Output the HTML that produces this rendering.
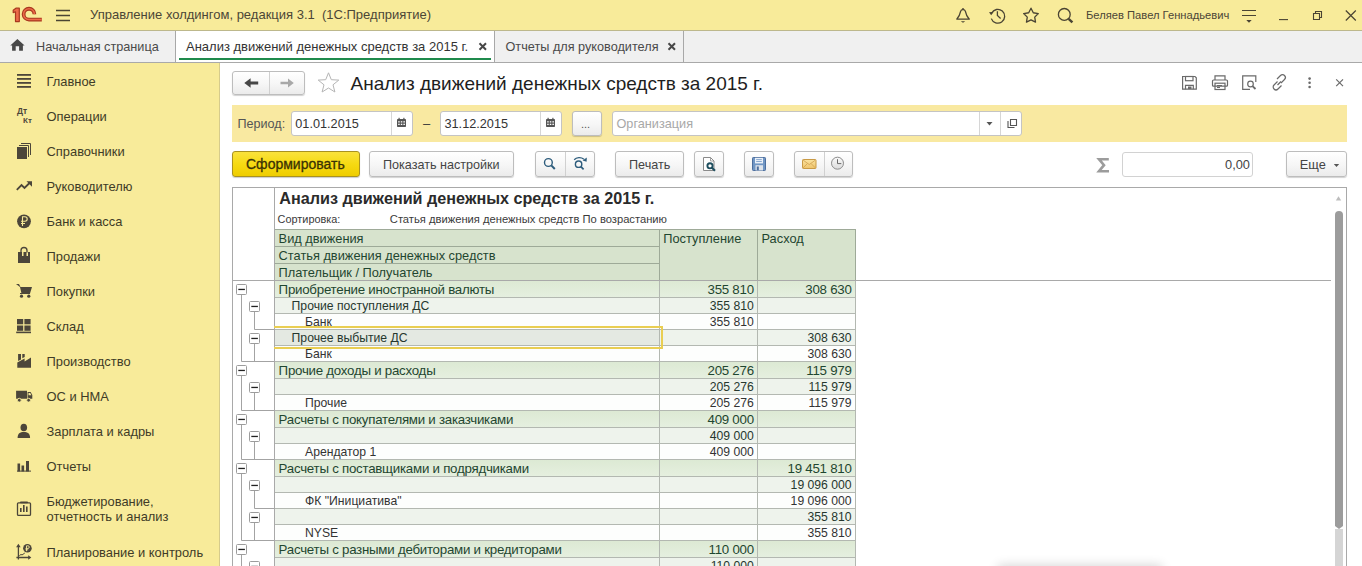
<!DOCTYPE html>
<html><head><meta charset="utf-8">
<style>
*{box-sizing:border-box;margin:0;padding:0}
html,body{width:1362px;height:566px;overflow:hidden;background:#fff}
body{position:relative;font-family:"Liberation Sans",sans-serif;color:#333}
.a{position:absolute;white-space:nowrap}
.btn{position:absolute;border:1px solid #BDBDBD;border-radius:3px;background:linear-gradient(#FFFFFF,#F6F6F6 55%,#EBEBEB);box-shadow:0 1px 1px rgba(0,0,0,.18)}
.inp{position:absolute;border:1px solid #C4C4C4;border-radius:3px;background:#fff}
svg{position:absolute;overflow:visible}
</style></head><body>

<div class="a" style="left:0px;top:0px;width:1362px;height:31px;background:#F8EB9A;border-bottom:1px solid #BDB88C"></div>
<div class="a" style="left:0px;top:31px;width:1362px;height:32px;background:#F0F0F0;border-bottom:1px solid #A9A9A9"></div>
<div class="a" style="left:0px;top:63px;width:220px;height:503px;background:#F8EB9A;border-right:1px solid #D6CB8C"></div>
<svg style="left:0;top:0" width="60" height="31" viewBox="0 0 60 31"><path d="M15.5 21.6 V11.8 L13.2 12.6 V10.3 L15.9 8.2 H19.3 V21.6 Z" fill="#EC6A48" stroke="#A8381F" stroke-width="1.2" stroke-linejoin="round"/><path d="M34.4 14.15 A5.4 5.4 0 1 0 29 19.55 H41.8" fill="none" stroke="#A8381F" stroke-width="3.8"/><path d="M34.4 14.15 A5.4 5.4 0 1 0 29 19.55 H41.8" fill="none" stroke="#EC6A48" stroke-width="1.5"/></svg>
<svg style="left:0;top:0" width="80" height="31"><g stroke="#4A4433" stroke-width="1.3"><path d="M56 10.5H70M56 15.5H70M56 20.5H70"/></g></svg>
<div class="a " style="left:90px;top:7px;font-size:13px;line-height:15px;color:#4B4636;font-weight:normal;">Управление холдингом, редакция 3.1&nbsp;&nbsp;(1С:Предприятие)</div>
<svg style="left:940px;top:0" width="140" height="31" viewBox="940 0 140 31"><g fill="none" stroke="#4A4433" stroke-width="1.2"><path d="M956.3 19.2 H969.8 M956.9 19 C958.8 16.8 960.2 13.5 960.6 11.4 C960.9 10.2 961.8 9.7 963 9.7 C964.2 9.7 965.1 10.2 965.4 11.4 C965.8 13.5 967.2 16.8 969.1 19" stroke-width="1.3"/><path d="M963 8 V9.8" stroke-width="1.4"/><path d="M991.6 13.2 A6.9 6.9 0 1 1 991.3 18.6" stroke-width="1.3"/><path d="M997.4 11.2 V15.5 L1000.6 18.5" stroke-width="1.3"/><path d="M1031.00 8.20 L1033.29 12.74 L1038.32 13.52 L1034.71 17.11 L1035.53 22.13 L1031.00 19.80 L1026.47 22.13 L1027.29 17.11 L1023.68 13.52 L1028.71 12.74 Z" stroke-width="1.3" stroke-linejoin="round"/><circle cx="1064.3" cy="14.4" r="5.9" stroke-width="1.3"/><path d="M1068.6 18.8 L1072.4 22.4" stroke-width="2.4"/></g><path d="M989 12.3 L993.6 11.7 L991.2 15.2 Z" fill="#4A4433"/><path d="M960.8 21.2 H965.2 L963 22.8 Z" fill="#4A4433"/></svg>
<div class="a " style="left:1086px;top:9px;font-size:11.2px;line-height:12px;color:#4B4636;font-weight:normal;">Беляев Павел Геннадьевич</div>
<svg style="left:1230px;top:0" width="132" height="31" viewBox="1230 0 132 31"><g fill="none" stroke="#4A4433" stroke-width="1.1"><path d="M1242 10.5 H1256 M1242 15.5 H1256"/><path d="M1279 19.6 H1288"/><path d="M1313.5 13.5 H1319.5 V19.5 H1313.5 Z M1315.5 13.5 V11.5 H1321.5 V17.5 H1319.5"/><path d="M1345.8 10.5 L1355.8 20.5 M1355.8 10.5 L1345.8 20.5" stroke-width="1.2"/></g><path d="M1246.3 20 H1251.7 L1249 22.8 Z" fill="#4A4433"/></svg>
<svg style="left:0;top:31px" width="30" height="31" viewBox="0 31 30 31"><path d="M17.4 39 L24.6 45.5 H22.9 V50.7 H19.1 V46.2 H15.7 V50.7 H12.1 V45.5 H10.3 Z" fill="#484848"/></svg>
<div class="a " style="left:36px;top:40px;font-size:12.7px;line-height:14px;color:#4A4A4A;font-weight:normal;">Начальная страница</div>
<div class="a" style="left:175px;top:31px;width:1px;height:31px;background:#A8A8A8"></div>
<div class="a" style="left:176px;top:31px;width:318px;height:31px;background:#fff"></div>
<div class="a" style="left:494px;top:31px;width:1px;height:31px;background:#A8A8A8"></div>
<div class="a" style="left:179px;top:58px;width:312px;height:2px;background:#1F8A4C"></div>
<div class="a " style="left:186px;top:39px;font-size:13px;line-height:15px;color:#333;font-weight:normal;">Анализ движений денежных средств за 2015 г.</div>
<svg style="left:470px;top:31px" width="220" height="31" viewBox="470 31 220 31"><g stroke="#474747" stroke-width="2"><path d="M479.5 43.2 L486 49.7 M486 43.2 L479.5 49.7"/><path d="M668.5 43.2 L675 49.7 M675 43.2 L668.5 49.7"/></g></svg>
<div class="a " style="left:505.5px;top:40px;font-size:12.7px;line-height:14px;color:#4A4A4A;font-weight:normal;">Отчеты для руководителя</div>
<div class="a" style="left:683px;top:31px;width:1px;height:31px;background:#A8A8A8"></div>
<div class="a " style="left:46.5px;top:74px;font-size:12.9px;line-height:15px;color:#403B27;font-weight:normal;">Главное</div>
<div class="a " style="left:46.5px;top:109px;font-size:12.9px;line-height:15px;color:#403B27;font-weight:normal;">Операции</div>
<div class="a " style="left:46.5px;top:144px;font-size:12.9px;line-height:15px;color:#403B27;font-weight:normal;">Справочники</div>
<div class="a " style="left:46.5px;top:179px;font-size:12.9px;line-height:15px;color:#403B27;font-weight:normal;">Руководителю</div>
<div class="a " style="left:46.5px;top:214px;font-size:12.9px;line-height:15px;color:#403B27;font-weight:normal;">Банк и касса</div>
<div class="a " style="left:46.5px;top:249px;font-size:12.9px;line-height:15px;color:#403B27;font-weight:normal;">Продажи</div>
<div class="a " style="left:46.5px;top:284px;font-size:12.9px;line-height:15px;color:#403B27;font-weight:normal;">Покупки</div>
<div class="a " style="left:46.5px;top:319px;font-size:12.9px;line-height:15px;color:#403B27;font-weight:normal;">Склад</div>
<div class="a " style="left:46.5px;top:354px;font-size:12.9px;line-height:15px;color:#403B27;font-weight:normal;">Производство</div>
<div class="a " style="left:46.5px;top:389px;font-size:12.9px;line-height:15px;color:#403B27;font-weight:normal;">ОС и НМА</div>
<div class="a " style="left:46.5px;top:424px;font-size:12.9px;line-height:15px;color:#403B27;font-weight:normal;">Зарплата и кадры</div>
<div class="a " style="left:46.5px;top:459px;font-size:12.9px;line-height:15px;color:#403B27;font-weight:normal;">Отчеты</div>
<div class="a " style="left:46.5px;top:494px;font-size:12.9px;line-height:15px;color:#403B27;font-weight:normal;">Бюджетирование,</div>
<div class="a " style="left:46.5px;top:509px;font-size:12.9px;line-height:15px;color:#403B27;font-weight:normal;">отчетность и анализ</div>
<div class="a " style="left:46.5px;top:545px;font-size:12.9px;line-height:15px;color:#403B27;font-weight:normal;">Планирование и контроль</div>
<svg style="left:0;top:0" width="40" height="566" viewBox="0 0 40 566"><g fill="#4C463A"><rect x="17" y="74" width="14" height="1.8"/><rect x="17" y="78" width="14" height="1.8"/><rect x="17" y="82" width="14" height="1.8"/><rect x="17" y="86" width="14" height="1.8"/><rect x="17" y="147" width="10" height="12"/></g><g fill="none" stroke="#4C463A" stroke-width="1.1"><path d="M19 145.5 H28.5 V157" stroke-width="1"/><path d="M21 143.5 H30.5 V155" stroke-width="1"/><path d="M16.8 189.8 L21.5 185 L24.5 188 L30 182.5" stroke-width="1.8"/></g><g fill="#4C463A"><path d="M26.5 181.2 H32 V186.7 Z"/><circle cx="24" cy="221.3" r="6.9"/><path d="M18 252 H22 V256 H23.5 V252 H26.5 V256 H28 V252 H30 V263 H18 Z"/><path d="M16 284 H19 L20.5 287 H32 L30 293.5 H21.5 L20 287 Z"/><circle cx="21.5" cy="296.2" r="1.6"/><circle cx="28.8" cy="296.2" r="1.6"/><rect x="20" y="293" width="10" height="1"/><rect x="17" y="319" width="6.2" height="5.3"/><rect x="24.4" y="319" width="6.2" height="5.3"/><rect x="17" y="325.5" width="6.2" height="5.3"/><rect x="24.4" y="325.5" width="6.2" height="5.3"/><rect x="16.2" y="331.6" width="14.8" height="1.6"/><path d="M17.3 367.8 V362.6 L24.6 358.5 V361.6 L31 357.6 V367.8 Z"/><path d="M18.1 354 H21 V359.4 L18.1 361 Z M22.3 354 H24.7 V357 L22.3 358.3 Z"/><path d="M16.1 390.8 H27 V398.8 H16.1 Z M27.6 392 H30.6 L32.3 395 V398.8 H27.6 Z"/><circle cx="19.3" cy="400.2" r="1.9" stroke="#F8EB9A" stroke-width="0.9"/><circle cx="28.6" cy="400.2" r="1.9" stroke="#F8EB9A" stroke-width="0.9"/><path d="M28.5 393 H30.2 L31.4 395.3 H28.5 Z" fill="#F8EB9A"/><ellipse cx="23.8" cy="427.5" rx="3.3" ry="3.8"/><path d="M17.6 438 C17.6 433.5 20 432 23.8 432 C27.6 432 30.1 433.5 30.1 438 Z"/><rect x="17.5" y="463.5" width="2.6" height="8"/><rect x="21.5" y="465.5" width="2.6" height="6"/><rect x="26" y="461" width="3" height="10.5"/><rect x="17" y="470.6" width="14" height="1"/><rect x="20" y="508" width="1.6" height="4"/><rect x="23" y="505" width="1.6" height="7"/><rect x="26" y="506.5" width="1.6" height="5.5"/><rect x="20" y="501.5" width="8" height="1.8" rx="0.8"/></g><g fill="none" stroke="#4C463A" stroke-width="1.3"><rect x="17.5" y="502.8" width="13" height="12.6" rx="1"/><path d="M18.4 546 V559.6 M16.4 557.5 H29" /><path d="M19.3 555.8 L21 554.4 L22 555 L24.8 553" stroke-width="1"/></g><g fill="#4C463A"><path d="M16.1 547.3 L18.4 543.8 L20.7 547.3 Z"/><path d="M28.2 555.2 L31.3 557.5 L28.2 559.8 Z"/><circle cx="27.4" cy="548.3" r="4.3"/></g></svg>
<svg style="left:0;top:0" width="40" height="566" viewBox="0 0 40 566"><g fill="none" stroke="#F8EB9A" stroke-width="1.1"><path d="M22.5 226 V216.8 H25 A2.2 2.2 0 0 1 25 221.2 H21 M21 223.5 H25"/><path d="M26.5 551.2 V545.8 H28 A1.3 1.3 0 0 1 28 548.4 H25.5 M25.5 549.8 H28.2" stroke-width="0.9"/></g><g fill="none" stroke="#4C463A" stroke-width="1.3"><path d="M21 252.5 V250.5 A3 3 0 0 1 27 250.5 V252.5"/></g><text x="17" y="114.2" font-family="Liberation Sans" font-weight="bold" font-size="8.4" fill="#4C463A">Дт</text><text x="23" y="123" font-family="Liberation Sans" font-weight="bold" font-size="8" fill="#4C463A">Кт</text></svg>
<div class="btn" style="left:232px;top:71px;width:73px;height:24px"></div>
<div class="a" style="left:269px;top:72px;width:1px;height:22px;background:#D0D0D0"></div>
<svg style="left:230px;top:70px" width="80" height="30" viewBox="230 70 80 30"><g fill="none" stroke-linecap="butt"><path d="M250 81.6 H258.2 V84.4 H250 Z M244.3 83 L250.6 78.3 V87.7 Z" fill="#474747"/><path d="M280.5 81.8 H288 V84.2 H280.5 Z M293.8 83 L288 78.6 V87.4 Z" fill="#A8A8A8"/></g></svg>
<svg style="left:310px;top:68px" width="40" height="30" viewBox="310 68 40 30"><path d="M328.5 72.8 L331.3 79.7 L338.8 80.1 L333 84.8 L334.9 92 L328.5 88 L322.1 92 L324 84.8 L318.2 80.1 L325.7 79.7 Z" fill="none" stroke="#B5B5B5" stroke-width="1"/></svg>
<div class="a " style="left:350.5px;top:73px;font-size:19px;line-height:21px;color:#1E1E1E;font-weight:normal;">Анализ движений денежных средств за 2015 г.</div>
<svg style="left:1170px;top:66px" width="192" height="36" viewBox="1170 66 192 36"><g fill="none" stroke="#6A6A6A" stroke-width="1.2"><path d="M1182.6 76.5 H1195 L1196.3 77.8 V89.2 H1182.6 Z"/><rect x="1185.5" y="76.5" width="7.5" height="4.2"/><path d="M1185.5 89.2 V85.3 H1193.3 V89.2"/><rect x="1212.5" y="80" width="15" height="6.2" rx="1"/><path d="M1215 80 V75.8 H1225 V80"/><rect x="1215" y="83.2" width="10" height="6.3"/><path d="M1217 85.5 H1222 M1217 87.5 H1220"/><path d="M1250 89.3 H1242.7 V75.8 H1255.8 V82"/><circle cx="1250.5" cy="84" r="2.8"/><path d="M1252.5 86.1 L1255.5 89" stroke-width="1.8"/><path d="M1277.5 81.5 L1274 85 A2.8 2.8 0 0 0 1278 89 L1281.5 85.5"/><path d="M1281 83 L1284.5 79.5 A2.8 2.8 0 0 0 1280.5 75.5 L1277 79"/><path d="M1277.5 85 L1281 81.5"/><path d="M1336.2 79.4 L1343 86.2 M1343 79.4 L1336.2 86.2"/></g><g fill="#6A6A6A"><circle cx="1309.6" cy="78.6" r="1.3"/><circle cx="1309.6" cy="82.8" r="1.3"/><circle cx="1309.6" cy="87" r="1.3"/><rect x="1188" y="86.5" width="3.5" height="2.5"/></g></svg>
<div class="a" style="left:232px;top:105px;width:1115px;height:37px;background:#F9E9A1"></div>
<div class="a " style="left:237.5px;top:117px;font-size:12.6px;line-height:14px;color:#555;font-weight:normal;">Период:</div>
<div class="inp" style="left:291px;top:111px;width:122px;height:25px"></div>
<div class="a" style="left:391px;top:112px;width:1px;height:23px;background:#D6D6D6"></div>
<div class="a " style="left:295.3px;top:117px;font-size:12.7px;line-height:14px;color:#333;font-weight:normal;">01.01.2015</div>
<div class="a " style="left:423px;top:116px;font-size:13px;line-height:15px;color:#3A3A3A;font-weight:normal;">–</div>
<div class="inp" style="left:440px;top:111px;width:122px;height:25px"></div>
<div class="a" style="left:540px;top:112px;width:1px;height:23px;background:#D6D6D6"></div>
<div class="a " style="left:444.5px;top:117px;font-size:12.7px;line-height:14px;color:#333;font-weight:normal;">31.12.2015</div>
<div class="btn" style="left:572px;top:110.5px;width:30px;height:25px"></div>
<div class="a " style="left:581px;top:118px;font-size:11px;line-height:12px;color:#555;font-weight:normal;">...</div>
<div class="inp" style="left:612px;top:111px;width:410px;height:25px"></div>
<div class="a" style="left:979px;top:112px;width:1px;height:23px;background:#D6D6D6"></div>
<div class="a" style="left:1000px;top:112px;width:1px;height:23px;background:#D6D6D6"></div>
<div class="a " style="left:616.5px;top:117px;font-size:12.7px;line-height:14px;color:#A8A8A8;font-weight:normal;">Организация</div>
<svg style="left:390px;top:110px" width="640" height="30" viewBox="390 110 640 30"><g fill="#555"><rect x="397" y="119" width="9" height="8" rx="0.8"/><rect x="546" y="119" width="9" height="8" rx="0.8"/><path d="M986.5 122 H992.5 L989.5 125.5 Z"/></g><g fill="#fff"><rect x="398.2" y="121.2" width="1.5" height="1.3"/><rect x="400.8" y="121.2" width="1.5" height="1.3"/><rect x="403.4" y="121.2" width="1.5" height="1.3"/><rect x="398.2" y="123.7" width="1.5" height="1.3"/><rect x="400.8" y="123.7" width="1.5" height="1.3"/><rect x="403.4" y="123.7" width="1.5" height="1.3"/><rect x="547.2" y="121.2" width="1.5" height="1.3"/><rect x="549.8" y="121.2" width="1.5" height="1.3"/><rect x="552.4" y="121.2" width="1.5" height="1.3"/><rect x="547.2" y="123.7" width="1.5" height="1.3"/><rect x="549.8" y="123.7" width="1.5" height="1.3"/><rect x="552.4" y="123.7" width="1.5" height="1.3"/></g><g fill="#555"><rect x="398.5" y="117.8" width="1.2" height="2"/><rect x="403.3" y="117.8" width="1.2" height="2"/><rect x="547.5" y="117.8" width="1.2" height="2"/><rect x="552.3" y="117.8" width="1.2" height="2"/></g><g fill="none" stroke="#555" stroke-width="1.1"><path d="M1008 121 V127.5 H1014.5 M1010.5 119.5 H1016.5 V125.5 H1010.5 Z"/></g></svg>
<div class="a" style="left:232px;top:151px;width:128px;height:26px;border:1px solid #A99220;border-radius:3px;background:linear-gradient(#FAE23C,#F6DA12 50%,#EFCD00);box-shadow:0 1px 1px rgba(0,0,0,.2)"></div>
<div class="a " style="left:246px;top:156px;font-size:14px;line-height:16px;color:#3A3204;font-weight:normal;-webkit-text-stroke:0.3px #3A3204">Сформировать</div>
<div class="btn" style="left:369px;top:151px;width:145px;height:26px"></div>
<div class="a " style="left:383px;top:158px;font-size:12.6px;line-height:14px;color:#444;font-weight:normal;">Показать настройки</div>
<div class="btn" style="left:535px;top:151px;width:60px;height:26px"></div>
<div class="a" style="left:565px;top:152px;width:1px;height:24px;background:#D0D0D0"></div>
<div class="btn" style="left:615px;top:151px;width:69px;height:26px"></div>
<div class="a " style="left:629px;top:158px;font-size:12.6px;line-height:14px;color:#444;font-weight:normal;">Печать</div>
<div class="btn" style="left:694px;top:151px;width:30px;height:26px"></div>
<div class="btn" style="left:744px;top:151px;width:30px;height:26px"></div>
<div class="btn" style="left:794px;top:151px;width:59px;height:26px"></div>
<div class="a" style="left:824px;top:152px;width:1px;height:24px;background:#D0D0D0"></div>
<svg style="left:530px;top:150px" width="330" height="30" viewBox="530 150 330 30"><g fill="none" stroke="#2D5C7C" stroke-width="1.4"><circle cx="548.4" cy="162.5" r="3.9"/><path d="M551.3 165.4 L554.8 169" stroke-width="2"/><circle cx="578.6" cy="164.2" r="3.2"/><path d="M580.9 166.6 L583.6 169.4" stroke-width="1.7"/><path d="M574.2 159.8 C576.5 157.2 581 157 584 159.3" stroke-width="1.3"/></g><path d="M586.8 157.6 L586.6 161.8 L582.6 160.6 Z" fill="#2D5C7C"/><path d="M703.5 157.5 H710.5 L714 161 V170.5 H703.5 Z" fill="#fff" stroke="#8A8A8A" stroke-width="1"/><path d="M710.5 157.5 V161 H714" fill="none" stroke="#8A8A8A" stroke-width="0.8"/><g fill="none" stroke="#1E4E5E" stroke-width="1.9"><circle cx="710" cy="165.8" r="2.6"/><path d="M711.9 167.8 L715 170.8" stroke-width="2.1"/></g><rect x="752.5" y="157.5" width="13" height="13" rx="0.8" fill="#7096C4" stroke="#4C6E9E" stroke-width="1"/><rect x="755" y="157.8" width="8" height="5.6" fill="#EAF0F8"/><path d="M756.2 159.6 H761.8 M756.2 161.5 H761.8" stroke="#7096C4" stroke-width="0.8"/><rect x="755.5" y="165.2" width="7.5" height="5.3" fill="#DDE3EA"/><rect x="756.8" y="166.5" width="2" height="3.8" fill="#4C6E9E"/><defs><linearGradient id="mg" x1="0" y1="0" x2="0" y2="1"><stop offset="0" stop-color="#FAE3A0"/><stop offset="1" stop-color="#EFC46A"/></linearGradient><linearGradient id="cg" x1="0" y1="0" x2="0" y2="1"><stop offset="0" stop-color="#FAFAFA"/><stop offset="1" stop-color="#DCDCDC"/></linearGradient></defs><rect x="802.5" y="159.5" width="13.5" height="9" rx="0.8" fill="url(#mg)" stroke="#C99A45" stroke-width="1"/><path d="M803 160 L809.25 164.6 L815.5 160 M803 168 L807.5 163.5 M815.5 168 L811 163.5" fill="none" stroke="#D4A555" stroke-width="0.9"/><circle cx="837.5" cy="163.2" r="6" fill="url(#cg)" stroke="#8C8C8C" stroke-width="1"/><path d="M837.5 159.2 V163.6 H841.3" fill="none" stroke="#6A6A6A" stroke-width="1"/></svg>
<svg style="left:1090px;top:150px" width="30" height="30" viewBox="1090 150 30 30"><path d="M1108.8 159.2 H1099 L1104 165.2 L1099 171.2 H1109" fill="none" stroke="#9C9C9C" stroke-width="2.6" stroke-linejoin="miter"/></svg>
<div class="inp" style="left:1122px;top:152px;width:131px;height:25px;border-color:#D2D2D2"></div>
<div class="a" style="right:112px;top:157px;font-size:12.8px;line-height:15px;color:#444;font-weight:normal;text-align:right;">0,00</div>
<div class="btn" style="left:1286px;top:151px;width:61px;height:26px"></div>
<div class="a " style="left:1299.8px;top:157px;font-size:12.8px;line-height:15px;color:#444;font-weight:normal;">Еще</div>
<svg style="left:1330px;top:155px" width="20" height="20" viewBox="1330 155 20 20"><path d="M1333.8 164 H1339.2 L1336.5 167 Z" fill="#555"/></svg>
<div class="a" style="left:232px;top:187px;width:1115px;height:400px;border:1px solid #A9A9A9;background:#fff"></div>
<div class="a " style="left:279.2px;top:189px;font-size:16.2px;line-height:18px;color:#2B2B2B;font-weight:bold;">Анализ движений денежных средств за 2015 г.</div>
<div class="a " style="left:277.6px;top:213px;font-size:10.9px;line-height:12px;color:#3A3A3A;font-weight:normal;">Сортировка:</div>
<div class="a " style="left:389.8px;top:213px;font-size:11.2px;line-height:12px;color:#3A3A3A;font-weight:normal;">Статья движения денежных средств По возрастанию</div>
<div class="a" style="left:274px;top:229px;width:386px;height:52px;background:#D7E3CD"></div>
<div class="a" style="left:659px;top:229px;width:98px;height:52px;background:#D7E3CD"></div>
<div class="a" style="left:757px;top:229px;width:99px;height:52px;background:#D7E3CD"></div>
<div class="a" style="left:274px;top:229px;width:385px;height:1px;background:#9EAA98"></div>
<div class="a" style="left:274px;top:246px;width:385px;height:1px;background:#9EAA98"></div>
<div class="a" style="left:274px;top:263px;width:385px;height:1px;background:#9EAA98"></div>
<div class="a" style="left:659px;top:229px;width:197px;height:1px;background:#9EAA98"></div>
<div class="a" style="left:659px;top:229px;width:1px;height:52px;background:#9EAA98"></div>
<div class="a" style="left:757px;top:229px;width:1px;height:52px;background:#9EAA98"></div>
<div class="a" style="left:855px;top:229px;width:1px;height:52px;background:#9EAA98"></div>
<div class="a " style="left:278.6px;top:231px;font-size:12.8px;line-height:15px;color:#1F4630;font-weight:normal;">Вид движения</div>
<div class="a " style="left:278.6px;top:248px;font-size:12.8px;line-height:15px;color:#1F4630;font-weight:normal;">Статья движения денежных средств</div>
<div class="a " style="left:278.6px;top:265px;font-size:12.8px;line-height:15px;color:#1F4630;font-weight:normal;">Плательщик / Получатель</div>
<div class="a " style="left:663.3px;top:231px;font-size:12.8px;line-height:15px;color:#1F4630;font-weight:normal;">Поступление</div>
<div class="a " style="left:761.5px;top:231px;font-size:12.8px;line-height:15px;color:#1F4630;font-weight:normal;">Расход</div>
<div class="a" style="left:275px;top:280px;width:581px;height:17px;background:linear-gradient(#DCE9D3,#E5EFDF)"></div>
<div class="a " style="left:278.6px;top:282px;font-size:13.3px;line-height:15px;color:#1F4630;font-weight:normal;letter-spacing:-0.25px">Приобретение иностранной валюты</div>
<div class="a" style="right:608.2px;top:282px;font-size:13.3px;line-height:15px;color:#1F4630;font-weight:normal;text-align:right;letter-spacing:-0.25px">355 810</div>
<div class="a" style="right:510.4px;top:282px;font-size:13.3px;line-height:15px;color:#1F4630;font-weight:normal;text-align:right;letter-spacing:-0.25px">308 630</div>
<div class="a" style="left:275px;top:297px;width:581px;height:16px;background:#EEF3EC"></div>
<div class="a " style="left:291.6px;top:299px;font-size:12.2px;line-height:14px;color:#26372E;font-weight:normal;">Прочие поступления ДС</div>
<div class="a" style="right:608.2px;top:299px;font-size:12.2px;line-height:14px;color:#26372E;font-weight:normal;text-align:right;">355 810</div>
<div class="a" style="left:275px;top:313px;width:581px;height:16px;background:#FDFEFD"></div>
<div class="a " style="left:305.0px;top:315px;font-size:12.2px;line-height:14px;color:#333;font-weight:normal;">Банк</div>
<div class="a" style="right:608.2px;top:315px;font-size:12.2px;line-height:14px;color:#333;font-weight:normal;text-align:right;">355 810</div>
<div class="a" style="left:275px;top:329px;width:384px;height:16px;background:#E4E9E2"></div>
<div class="a" style="left:659px;top:329px;width:197px;height:16px;background:#EEF3EC"></div>
<div class="a " style="left:291.6px;top:331px;font-size:12.2px;line-height:14px;color:#26372E;font-weight:normal;">Прочее выбытие ДС</div>
<div class="a" style="right:510.4px;top:331px;font-size:12.2px;line-height:14px;color:#26372E;font-weight:normal;text-align:right;">308 630</div>
<div class="a" style="left:275px;top:345px;width:581px;height:16px;background:#FDFEFD"></div>
<div class="a " style="left:305.0px;top:347px;font-size:12.2px;line-height:14px;color:#333;font-weight:normal;">Банк</div>
<div class="a" style="right:510.4px;top:347px;font-size:12.2px;line-height:14px;color:#333;font-weight:normal;text-align:right;">308 630</div>
<div class="a" style="left:275px;top:361px;width:581px;height:17px;background:linear-gradient(#DCE9D3,#E5EFDF)"></div>
<div class="a " style="left:278.6px;top:363px;font-size:13.3px;line-height:15px;color:#1F4630;font-weight:normal;letter-spacing:-0.25px">Прочие доходы и расходы</div>
<div class="a" style="right:608.2px;top:363px;font-size:13.3px;line-height:15px;color:#1F4630;font-weight:normal;text-align:right;letter-spacing:-0.25px">205 276</div>
<div class="a" style="right:510.4px;top:363px;font-size:13.3px;line-height:15px;color:#1F4630;font-weight:normal;text-align:right;letter-spacing:-0.25px">115 979</div>
<div class="a" style="left:275px;top:378px;width:581px;height:16px;background:#EEF3EC"></div>
<div class="a" style="right:608.2px;top:380px;font-size:12.2px;line-height:14px;color:#26372E;font-weight:normal;text-align:right;">205 276</div>
<div class="a" style="right:510.4px;top:380px;font-size:12.2px;line-height:14px;color:#26372E;font-weight:normal;text-align:right;">115 979</div>
<div class="a" style="left:275px;top:394px;width:581px;height:16px;background:#FDFEFD"></div>
<div class="a " style="left:305.0px;top:396px;font-size:12.2px;line-height:14px;color:#333;font-weight:normal;">Прочие</div>
<div class="a" style="right:608.2px;top:396px;font-size:12.2px;line-height:14px;color:#333;font-weight:normal;text-align:right;">205 276</div>
<div class="a" style="right:510.4px;top:396px;font-size:12.2px;line-height:14px;color:#333;font-weight:normal;text-align:right;">115 979</div>
<div class="a" style="left:275px;top:410px;width:581px;height:17px;background:linear-gradient(#DCE9D3,#E5EFDF)"></div>
<div class="a " style="left:278.6px;top:412px;font-size:13.3px;line-height:15px;color:#1F4630;font-weight:normal;letter-spacing:-0.25px">Расчеты с покупателями и заказчиками</div>
<div class="a" style="right:608.2px;top:412px;font-size:13.3px;line-height:15px;color:#1F4630;font-weight:normal;text-align:right;letter-spacing:-0.25px">409 000</div>
<div class="a" style="left:275px;top:427px;width:581px;height:16px;background:#EEF3EC"></div>
<div class="a" style="right:608.2px;top:429px;font-size:12.2px;line-height:14px;color:#26372E;font-weight:normal;text-align:right;">409 000</div>
<div class="a" style="left:275px;top:443px;width:581px;height:16px;background:#FDFEFD"></div>
<div class="a " style="left:305.0px;top:445px;font-size:12.2px;line-height:14px;color:#333;font-weight:normal;">Арендатор 1</div>
<div class="a" style="right:608.2px;top:445px;font-size:12.2px;line-height:14px;color:#333;font-weight:normal;text-align:right;">409 000</div>
<div class="a" style="left:275px;top:459px;width:581px;height:17px;background:linear-gradient(#DCE9D3,#E5EFDF)"></div>
<div class="a " style="left:278.6px;top:461px;font-size:13.3px;line-height:15px;color:#1F4630;font-weight:normal;letter-spacing:-0.25px">Расчеты с поставщиками и подрядчиками</div>
<div class="a" style="right:510.4px;top:461px;font-size:13.3px;line-height:15px;color:#1F4630;font-weight:normal;text-align:right;letter-spacing:-0.25px">19 451 810</div>
<div class="a" style="left:275px;top:476px;width:581px;height:16px;background:#EEF3EC"></div>
<div class="a" style="right:510.4px;top:478px;font-size:12.2px;line-height:14px;color:#26372E;font-weight:normal;text-align:right;">19 096 000</div>
<div class="a" style="left:275px;top:492px;width:581px;height:16px;background:#FDFEFD"></div>
<div class="a " style="left:305.0px;top:494px;font-size:12.2px;line-height:14px;color:#333;font-weight:normal;">ФК &quot;Инициатива&quot;</div>
<div class="a" style="right:510.4px;top:494px;font-size:12.2px;line-height:14px;color:#333;font-weight:normal;text-align:right;">19 096 000</div>
<div class="a" style="left:275px;top:508px;width:581px;height:16px;background:#EEF3EC"></div>
<div class="a" style="right:510.4px;top:510px;font-size:12.2px;line-height:14px;color:#26372E;font-weight:normal;text-align:right;">355 810</div>
<div class="a" style="left:275px;top:524px;width:581px;height:16px;background:#FDFEFD"></div>
<div class="a " style="left:305.0px;top:526px;font-size:12.2px;line-height:14px;color:#333;font-weight:normal;">NYSE</div>
<div class="a" style="right:510.4px;top:526px;font-size:12.2px;line-height:14px;color:#333;font-weight:normal;text-align:right;">355 810</div>
<div class="a" style="left:275px;top:540px;width:581px;height:17px;background:linear-gradient(#DCE9D3,#E5EFDF)"></div>
<div class="a " style="left:278.6px;top:542px;font-size:13.3px;line-height:15px;color:#1F4630;font-weight:normal;letter-spacing:-0.25px">Расчеты с разными дебиторами и кредиторами</div>
<div class="a" style="right:608.2px;top:542px;font-size:13.3px;line-height:15px;color:#1F4630;font-weight:normal;text-align:right;letter-spacing:-0.25px">110 000</div>
<div class="a" style="left:275px;top:557px;width:581px;height:16px;background:#EEF3EC"></div>
<div class="a" style="right:608.2px;top:559px;font-size:12.2px;line-height:14px;color:#26372E;font-weight:normal;text-align:right;">110 000</div>
<div class="a" style="left:275px;top:297px;width:581px;height:1px;background:#B3B8B1"></div>
<div class="a" style="left:275px;top:313px;width:581px;height:1px;background:#B3B8B1"></div>
<div class="a" style="left:275px;top:329px;width:581px;height:1px;background:#B3B8B1"></div>
<div class="a" style="left:275px;top:345px;width:581px;height:1px;background:#B3B8B1"></div>
<div class="a" style="left:275px;top:361px;width:581px;height:1px;background:#B3B8B1"></div>
<div class="a" style="left:275px;top:378px;width:581px;height:1px;background:#B3B8B1"></div>
<div class="a" style="left:275px;top:394px;width:581px;height:1px;background:#B3B8B1"></div>
<div class="a" style="left:275px;top:410px;width:581px;height:1px;background:#B3B8B1"></div>
<div class="a" style="left:275px;top:427px;width:581px;height:1px;background:#B3B8B1"></div>
<div class="a" style="left:275px;top:443px;width:581px;height:1px;background:#B3B8B1"></div>
<div class="a" style="left:275px;top:459px;width:581px;height:1px;background:#B3B8B1"></div>
<div class="a" style="left:275px;top:476px;width:581px;height:1px;background:#B3B8B1"></div>
<div class="a" style="left:275px;top:492px;width:581px;height:1px;background:#B3B8B1"></div>
<div class="a" style="left:275px;top:508px;width:581px;height:1px;background:#B3B8B1"></div>
<div class="a" style="left:275px;top:524px;width:581px;height:1px;background:#B3B8B1"></div>
<div class="a" style="left:275px;top:540px;width:581px;height:1px;background:#B3B8B1"></div>
<div class="a" style="left:275px;top:557px;width:581px;height:1px;background:#B3B8B1"></div>
<div class="a" style="left:275px;top:573px;width:581px;height:1px;background:#B3B8B1"></div>
<div class="a" style="left:659px;top:280px;width:1px;height:290px;background:#B3B8B1"></div>
<div class="a" style="left:757px;top:280px;width:1px;height:290px;background:#B3B8B1"></div>
<div class="a" style="left:855px;top:280px;width:1px;height:290px;background:#B3B8B1"></div>
<div class="a" style="left:232px;top:280px;width:1099px;height:1px;background:#A9A9A9"></div>
<div class="a" style="left:274px;top:188px;width:1px;height:380px;background:#A9A9A9"></div>
<div class="a" style="left:274px;top:326px;width:389px;height:23px;border:2px solid #E9CE52;border-left:none"></div>
<svg style="left:0;top:0" width="280" height="566" viewBox="0 0 280 566"><g fill="none" stroke="#A3A3A3" stroke-width="1"><path d="M241.5 295 V361.5 H274"/><path d="M254.5 311 V329.5 H274"/><path d="M254.5 343 V361.5 H274"/><path d="M241.5 376 V410.5 H274"/><path d="M254.5 392 V410.5 H274"/><path d="M241.5 425 V459.5 H274"/><path d="M254.5 441 V459.5 H274"/><path d="M241.5 474 V540.5 H274"/><path d="M254.5 490 V508.5 H274"/><path d="M254.5 522 V540.5 H274"/><path d="M241.5 555 V640.5 H274"/><path d="M254.5 571 V589.5 H274"/></g><rect x="236.5" y="284.5" width="10" height="10" rx="1" fill="#fff" stroke="#9C9C9C" stroke-width="1"/><rect x="238.3" y="288.8" width="6.6" height="1.3" fill="#222"/><rect x="249.5" y="301.5" width="10" height="10" rx="1" fill="#fff" stroke="#9C9C9C" stroke-width="1"/><rect x="251.3" y="305.8" width="6.6" height="1.3" fill="#222"/><rect x="249.5" y="333.5" width="10" height="10" rx="1" fill="#fff" stroke="#9C9C9C" stroke-width="1"/><rect x="251.3" y="337.8" width="6.6" height="1.3" fill="#222"/><rect x="236.5" y="365.5" width="10" height="10" rx="1" fill="#fff" stroke="#9C9C9C" stroke-width="1"/><rect x="238.3" y="369.8" width="6.6" height="1.3" fill="#222"/><rect x="249.5" y="382.5" width="10" height="10" rx="1" fill="#fff" stroke="#9C9C9C" stroke-width="1"/><rect x="251.3" y="386.8" width="6.6" height="1.3" fill="#222"/><rect x="236.5" y="414.5" width="10" height="10" rx="1" fill="#fff" stroke="#9C9C9C" stroke-width="1"/><rect x="238.3" y="418.8" width="6.6" height="1.3" fill="#222"/><rect x="249.5" y="431.5" width="10" height="10" rx="1" fill="#fff" stroke="#9C9C9C" stroke-width="1"/><rect x="251.3" y="435.8" width="6.6" height="1.3" fill="#222"/><rect x="236.5" y="463.5" width="10" height="10" rx="1" fill="#fff" stroke="#9C9C9C" stroke-width="1"/><rect x="238.3" y="467.8" width="6.6" height="1.3" fill="#222"/><rect x="249.5" y="480.5" width="10" height="10" rx="1" fill="#fff" stroke="#9C9C9C" stroke-width="1"/><rect x="251.3" y="484.8" width="6.6" height="1.3" fill="#222"/><rect x="249.5" y="512.5" width="10" height="10" rx="1" fill="#fff" stroke="#9C9C9C" stroke-width="1"/><rect x="251.3" y="516.8" width="6.6" height="1.3" fill="#222"/><rect x="236.5" y="544.5" width="10" height="10" rx="1" fill="#fff" stroke="#9C9C9C" stroke-width="1"/><rect x="238.3" y="548.8" width="6.6" height="1.3" fill="#222"/><rect x="249.5" y="561.5" width="10" height="10" rx="1" fill="#fff" stroke="#9C9C9C" stroke-width="1"/><rect x="251.3" y="565.8" width="6.6" height="1.3" fill="#222"/></svg>
<svg style="left:1330px;top:190px" width="20" height="376" viewBox="1330 190 20 376"><path d="M1335.8 200.5 L1338.5 196.3 L1341.2 200.5 Z" fill="#BDBDBD"/><rect x="1335" y="529" width="8" height="40" fill="#D5D5D5"/><path d="M1335 215 A4 4 0 0 1 1343 215 V526 L1339 529 L1335 526 Z" fill="#9C9C9C"/></svg>
<div class="a" style="left:1000px;top:567px;width:160px;height:40px;background:#fff;box-shadow:0 0 10px 2px rgba(0,0,0,.16)"></div>
</body></html>
